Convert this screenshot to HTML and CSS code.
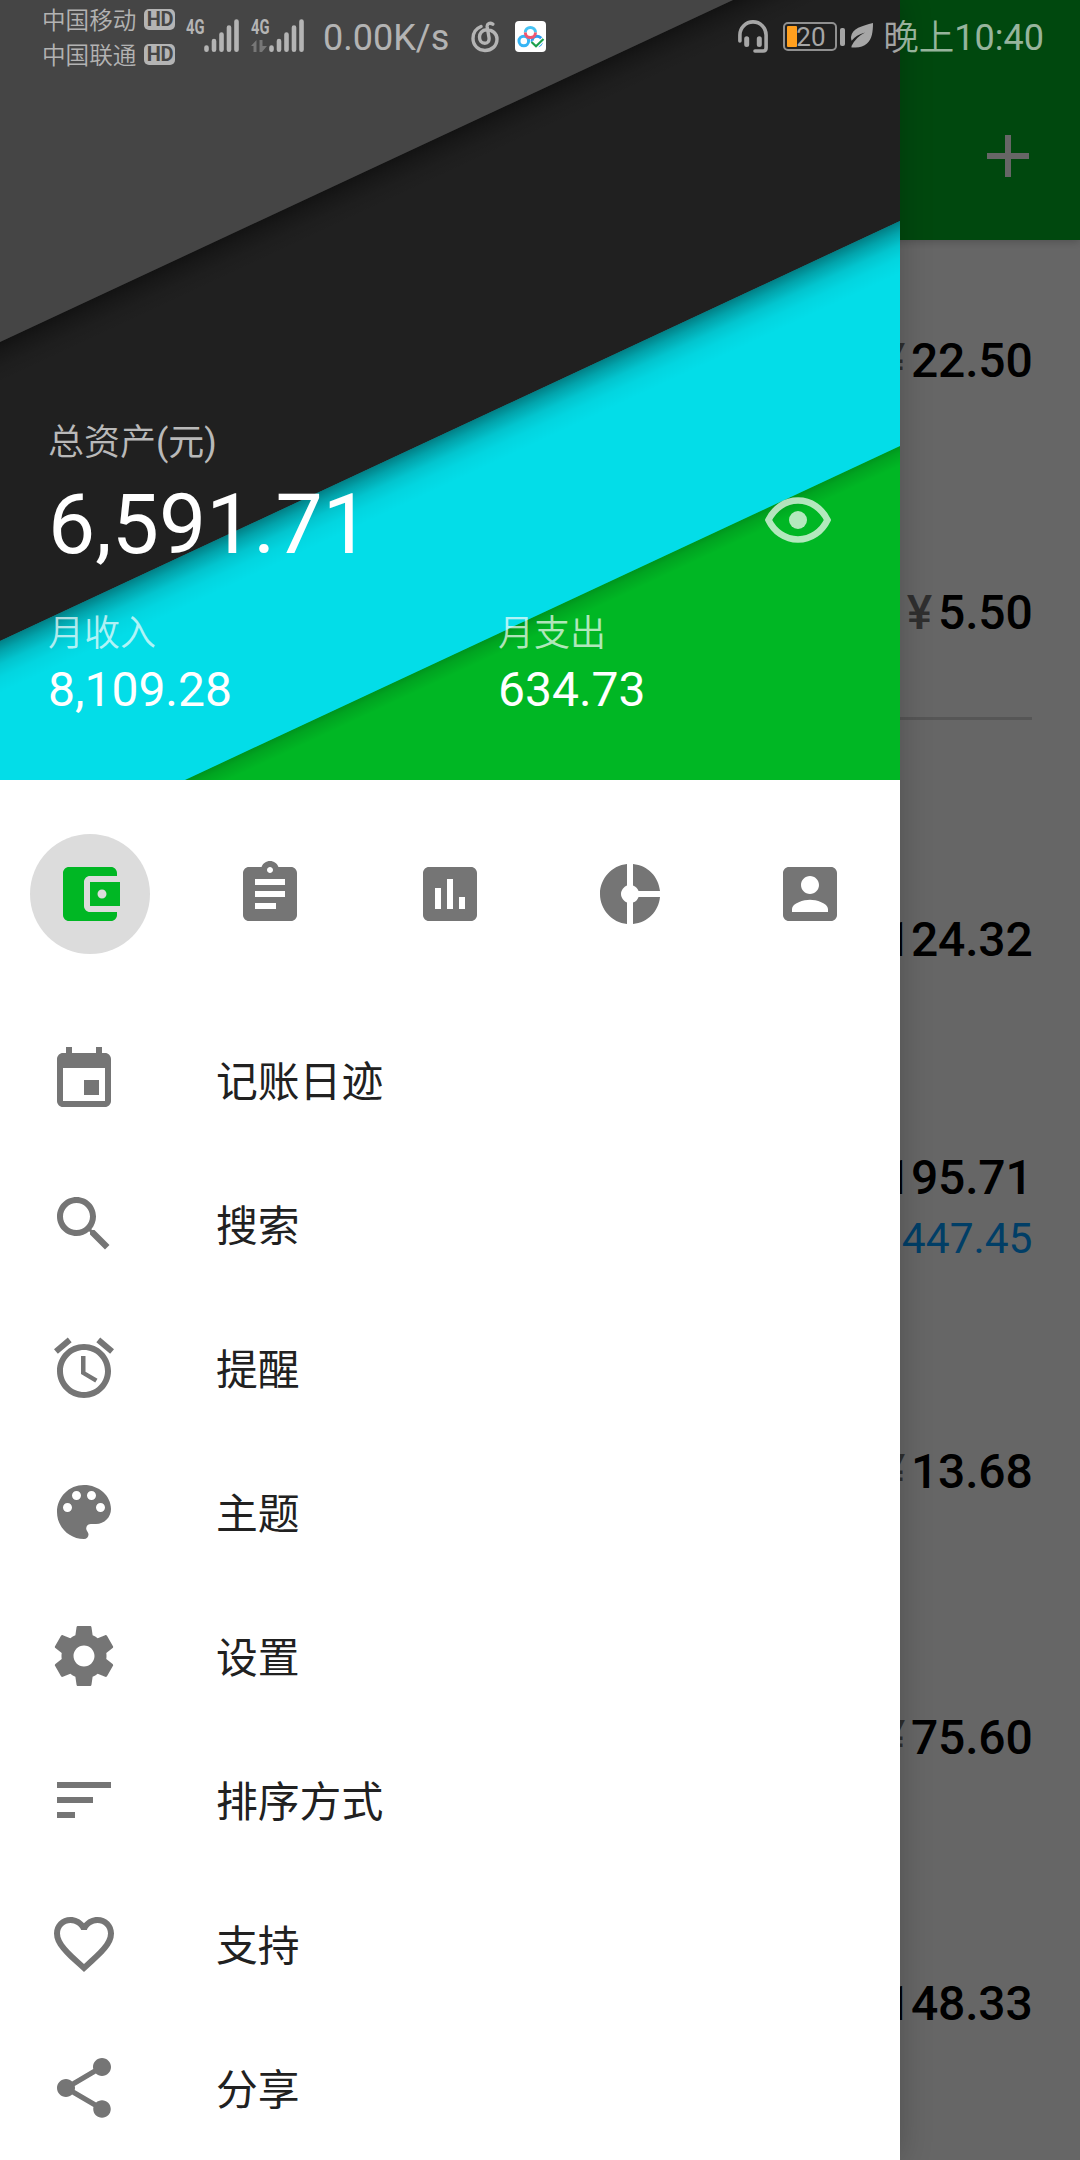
FILE: index.html
```html
<!DOCTYPE html>
<html lang="zh-CN">
<head>
<meta charset="utf-8">
<title>记账</title>
<link rel="stylesheet" href="styles.css">
</head>
<body>
<div class="screen">
  <main class="page">
    <header class="appbar">
      <svg class="icon appbar-add" viewBox="0 0 24 24"><path d="M19 13h-6v6h-2v-6H5v-2h6V5h2v6h6v2z"/></svg>
    </header>
    <section class="recent">
      <div class="entry"><span class="yen">¥</span>22.50</div>
      <div class="entry entry-last"><span class="yen">¥</span>5.50</div>
    </section>
    <section class="accounts">
      <div class="account"><p class="amount"><span class="yen">¥</span>124.32</p></div>
      <div class="account"><p class="amount"><span class="yen">¥</span>195.71</p><p class="credit">447.45</p></div>
      <div class="account"><p class="amount"><span class="yen">¥</span>13.68</p></div>
      <div class="account"><p class="amount"><span class="yen">¥</span>75.60</p></div>
      <div class="account"><p class="amount"><span class="yen">¥</span>148.33</p></div>
    </section>
  </main>

  <div class="scrim"></div>

  <aside class="drawer">
    <header class="summary">
      <svg class="backdrop" viewBox="0 0 900 780">
        <defs>
          <linearGradient id="s1" gradientUnits="userSpaceOnUse" x1="0" y1="342" x2="16" y2="376.3">
            <stop offset="0" stop-opacity=".42"/><stop offset=".25" stop-opacity=".25"/><stop offset=".6" stop-opacity=".08"/><stop offset="1" stop-opacity="0"/>
          </linearGradient>
          <linearGradient id="s2" gradientUnits="userSpaceOnUse" x1="0" y1="641" x2="20" y2="683.9">
            <stop offset="0" stop-opacity=".42"/><stop offset=".2" stop-opacity=".26"/><stop offset=".45" stop-opacity=".11"/><stop offset=".7" stop-opacity=".035"/><stop offset="1" stop-opacity="0"/>
          </linearGradient>
          <linearGradient id="s3" gradientUnits="userSpaceOnUse" x1="0" y1="866" x2="8" y2="883.100">
            <stop offset="0" stop-opacity=".2"/><stop offset=".35" stop-opacity=".1"/><stop offset="1" stop-opacity="0"/>
          </linearGradient>
        </defs>
        <path fill="#00b724" d="M0 0h900v780H0z"/>
        <path fill="url(#s3)" d="M0 866 900 446v334H0z"/>
        <path fill="#03dde8" d="M0 0H900V446L185 780H0z"/>
        <path fill="url(#s2)" d="M0 641 900 221V446L185 780H0z"/>
        <path fill="#202020" d="M0 0H900V221L0 641z"/>
        <path fill="url(#s1)" d="M0 342 733 0H900V221L0 641z"/>
        <path fill="#454545" d="M0 0H733L0 342z"/>
      </svg>
      <div class="total">
        <div>
          <p class="label">总资产<span class="unit">(元)</span></p>
          <p class="total-value">6,591.71</p>
        </div>
        <svg class="eye" viewBox="0 0 66 46"><path d="M3.500 23C9 11.500 20 3.500 33 3.500S57 11.500 62.500 23C57 34.500 46 42.500 33 42.500S9 34.500 3.500 23z"/><circle cx="33" cy="23" r="9"/></svg>
      </div>
      <div class="month">
        <div><p class="label">月收入</p><p class="month-value">8,109.28</p></div>
        <div><p class="label">月支出</p><p class="month-value">634.73</p></div>
      </div>
    </header>

    <nav class="tabs">
      <a class="tab tab-active"><svg class="icon" viewBox="0 0 24 24"><path d="M21 18v1c0 1.100-.9 2-2 2H5c-1.110 0-2-.9-2-2V5c0-1.100.89-2 2-2h14c1.100 0 2 .9 2 2v1h-9c-1.110 0-2 .9-2 2v8c0 1.100.89 2 2 2h9zm-9-2h10V8H12v8zm4-2.500c-.83 0-1.500-.67-1.500-1.500s.67-1.500 1.500-1.500 1.500.67 1.500 1.500-.67 1.500-1.500 1.500z"/></svg></a>
      <a class="tab"><svg class="icon" viewBox="0 0 24 24"><path d="M19 3h-4.180C14.400 1.840 13.300 1 12 1c-1.300 0-2.400.84-2.820 2H5c-1.100 0-2 .9-2 2v14c0 1.100.9 2 2 2h14c1.100 0 2-.9 2-2V5c0-1.100-.9-2-2-2zm-7 0c.55 0 1 .45 1 1s-.45 1-1 1-1-.45-1-1 .45-1 1-1zm2 14H7v-2h7v2zm3-4H7v-2h10v2zm0-4H7V7h10v2z"/></svg></a>
      <a class="tab"><svg class="icon" viewBox="0 0 24 24"><path d="M19 3H5c-1.100 0-2 .9-2 2v14c0 1.100.9 2 2 2h14c1.100 0 2-.9 2-2V5c0-1.100-.9-2-2-2zM9 17H7v-7h2v7zm4 0h-2V7h2v10zm4 0h-2v-4h2v4z"/></svg></a>
      <a class="tab"><svg class="icon" viewBox="0 0 24 24"><path d="M11 9.160V2c-5 .5-9 4.790-9 10s4 9.500 9 10v-7.160c-1-.41-2-1.520-2-2.840s1-2.430 2-2.840zM14.860 11H22c-.48-4.750-4-8.530-9-9v7.160c1 .3 1.520.98 1.860 1.840zM13 14.840V22c5-.47 8.520-4.250 9-9h-7.140c-.34.86-.86 1.540-1.860 1.840z"/></svg></a>
      <a class="tab"><svg class="icon" viewBox="0 0 24 24"><path d="M3 5v14c0 1.100.89 2 2 2h14c1.100 0 2-.9 2-2V5c0-1.100-.9-2-2-2H5c-1.110 0-2 .9-2 2zm12 4c0 1.660-1.340 3-3 3s-3-1.340-3-3 1.340-3 3-3 3 1.340 3 3zm-9 8c0-2 4-3.100 6-3.100s6 1.100 6 3.100v1H6v-1z"/></svg></a>
    </nav>

    <ul class="menu">
      <li><svg class="icon" viewBox="0 0 24 24"><path d="M17 12h-5v5h5v-5z"/><path d="M16 1v2H8V1H6v2H5c-1.100 0-2 .9-2 2v14c0 1.100.9 2 2 2h14c1.100 0 2-.9 2-2V5c0-1.100-.9-2-2-2h-1V1h-2zm3 18H5V8h14v11z"/></svg><span>记账日迹</span></li>
      <li><svg class="icon" viewBox="0 0 24 24"><path d="M15.500 14h-.79l-.28-.27C15.410 12.590 16 11.110 16 9.500 16 5.910 13.090 3 9.500 3S3 5.910 3 9.500 5.910 16 9.500 16c1.610 0 3.090-.59 4.230-1.570l.27.28v.79l5 4.990L20.490 19l-4.990-5zm-6 0C7.010 14 5 11.990 5 9.500S7.010 5 9.500 5 14 7.010 14 9.500 11.990 14 9.500 14z"/></svg><span>搜索</span></li>
      <li><svg class="icon" viewBox="0 0 24 24"><path d="M22 5.720l-4.600-3.860-1.290 1.530 4.600 3.860L22 5.720zM7.880 3.390L6.600 1.860 2 5.710l1.290 1.530 4.590-3.850zM12.500 8H11v6l4.750 2.850.75-1.230-4-2.370V8zM12 4c-4.970 0-9 4.030-9 9s4.020 9 9 9c4.970 0 9-4.030 9-9s-4.030-9-9-9zm0 16c-3.870 0-7-3.130-7-7s3.130-7 7-7 7 3.130 7 7-3.130 7-7 7z"/></svg><span>提醒</span></li>
      <li><svg class="icon" viewBox="0 0 24 24"><path d="M12 3c-4.970 0-9 4.030-9 9s4.030 9 9 9c.83 0 1.500-.67 1.500-1.500 0-.39-.15-.74-.39-1.010-.23-.26-.38-.61-.38-.99 0-.83.67-1.500 1.500-1.500H16c2.760 0 5-2.240 5-5 0-4.420-4.030-8-9-8zm-5.500 9c-.83 0-1.500-.67-1.500-1.500S5.670 9 6.500 9 8 9.670 8 10.500 7.330 12 6.500 12zm3-4C8.670 8 8 7.330 8 6.500S8.670 5 9.500 5s1.500.67 1.500 1.500S10.330 8 9.500 8zm5 0c-.83 0-1.500-.67-1.500-1.500S13.670 5 14.500 5s1.500.67 1.500 1.500S15.330 8 14.500 8zm3 4c-.83 0-1.500-.67-1.500-1.500S16.670 9 17.500 9s1.500.67 1.500 1.500-.67 1.500-1.500 1.500z"/></svg><span>主题</span></li>
      <li><svg class="icon" viewBox="0 0 24 24"><path d="M19.430 12.980c.04-.32.07-.64.07-.98s-.03-.66-.07-.98l2.110-1.650c.19-.15.24-.42.12-.64l-2-3.460c-.12-.22-.39-.3-.61-.22l-2.490 1c-.52-.4-1.080-.73-1.690-.98l-.38-2.650C14.460 2.180 14.250 2 14 2h-4c-.25 0-.46.18-.49.42l-.38 2.650c-.61.25-1.170.59-1.690.98l-2.490-1c-.23-.09-.49 0-.61.22l-2 3.460c-.13.22-.07.49.12.64l2.110 1.650c-.04.32-.07.65-.07.98s.03.66.07.98l-2.110 1.650c-.19.15-.24.42-.12.64l2 3.460c.12.22.39.3.61.22l2.490-1c.52.4 1.080.73 1.690.98l.38 2.650c.03.24.24.42.49.42h4c.25 0 .46-.18.49-.42l.38-2.650c.61-.25 1.170-.59 1.690-.98l2.490 1c.23.09.49 0 .61-.22l2-3.460c.12-.22.07-.49-.12-.64l-2.110-1.650zM12 15.500c-1.930 0-3.500-1.570-3.500-3.500s1.570-3.500 3.500-3.500 3.500 1.570 3.500 3.500-1.570 3.500-3.500 3.500z"/></svg><span>设置</span></li>
      <li><svg class="icon" viewBox="0 0 24 24"><path d="M3 18h6v-2H3v2zM3 6v2h18V6H3zm0 7h12v-2H3v2z"/></svg><span>排序方式</span></li>
      <li><svg class="icon" viewBox="0 0 24 24"><path d="M16.500 3c-1.740 0-3.410.81-4.500 2.090C10.910 3.810 9.240 3 7.500 3 4.420 3 2 5.420 2 8.500c0 3.780 3.400 6.860 8.550 11.540L12 21.350l1.450-1.320C18.600 15.360 22 12.280 22 8.500 22 5.420 19.580 3 16.500 3zm-4.400 15.550l-.1.100-.1-.1C7.140 14.240 4 11.390 4 8.500 4 6.500 5.500 5 7.500 5c1.540 0 3.040.99 3.570 2.360h1.870C13.460 5.990 14.960 5 16.500 5c2 0 3.500 1.500 3.500 3.500 0 2.890-3.140 5.740-7.900 10.050z"/></svg><span>支持</span></li>
      <li><svg class="icon" viewBox="0 0 24 24"><path d="M18 16.080c-.76 0-1.440.3-1.960.77L8.910 12.700c.05-.23.09-.46.09-.7s-.04-.47-.09-.7l7.050-4.110c.54.5 1.250.81 2.040.81 1.660 0 3-1.340 3-3s-1.340-3-3-3-3 1.340-3 3c0 .24.04.47.09.7L8.040 9.810C7.500 9.310 6.790 9 6 9c-1.660 0-3 1.340-3 3s1.340 3 3 3c.79 0 1.500-.31 2.040-.81l7.120 4.160c-.05.21-.08.43-.08.65 0 1.610 1.310 2.920 2.920 2.920s2.920-1.310 2.920-2.920-1.310-2.920-2.920-2.920z"/></svg><span>分享</span></li>
    </ul>
  </aside>

  <div class="statusbar">
    <div class="carriers">
      <p>中国移动<b class="hd">HD</b></p>
      <p>中国联通<b class="hd">HD</b></p>
    </div>
    <svg class="signals" viewBox="0 0 120 72">
      <text x="0" y="34" textLength="18.500" lengthAdjust="spacingAndGlyphs">4G</text>
      <g stroke-width="4.600" stroke-linecap="round">
        <path d="M20.500 47.600v2.200M28 41v8.800M35.500 34.500v15.300M43 27.500v22.300M50.500 21.500v28.300"/>
        <path d="M85.500 47.600v2.200M93 41v8.800M100.500 34.500v15.300M108 27.500v22.300M115.500 21.500v28.300"/>
      </g>
      <text x="65" y="34" textLength="18.500" lengthAdjust="spacingAndGlyphs">4G</text>
      <path class="traffic" d="M65 46l5.500-6v12h-3v-6zM73.500 40h3v6h4.500l-5 6h-2.500z"/>
    </svg>
    <span class="speed">0.00K/s</span>
    <svg class="music" viewBox="0 0 28 32"><path d="M10 5.500C5 7.500 2 12 2 17.500 2 24.500 7.500 29.500 14 29.500s12-4.500 12-11.500C26 12.500 21.500 8.800 15.500 8.800 11 8.800 8.500 12.500 8.500 16s2 6.300 5.300 6.300S18.500 19.800 18 16.500L16.200 6C15.800 2.500 19 1.200 21.800 3.200"/></svg>
    <svg class="cloud" viewBox="0 0 31 31">
      <rect width="31" height="31" rx="4" fill="#fff"/>
      <g fill="none" stroke-width="3"><circle cx="8.800" cy="20" r="4.800" stroke="#36b5f5"/><circle cx="22" cy="20" r="4.800" stroke="#2b9df0"/><path d="M10.300 11.500a5.100 5.100 0 1 1 10.200 0" stroke="#46c3f4"/><path d="M10.300 11.500a5.100 5.100 0 1 0 10.200 0" stroke="#f0566f"/></g>
      <path d="M16.500 21l4.500 4.300 7.500-7.300" fill="none" stroke="#fff" stroke-width="4.500"/>
      <path d="M16.500 21l4.500 4.300 7.500-7.300" fill="none" stroke="#1c9f4b" stroke-width="2.200"/>
    </svg>
    <span class="spacer"></span>
    <svg class="headset" viewBox="0 0 30 34"><path fill="none" stroke-width="3.600" stroke-linecap="round" d="M1.900 21V15a13.100 13.100 0 0 1 26.200 0v13q0 3-3 3H17"/><path fill="none" stroke-width="5" stroke-linecap="round" d="M8.700 18.700v5.800M21.300 18.700v5.800"/></svg>
    <div class="battery"><span class="battery-level"></span>20</div>
    <svg class="leaf" viewBox="0 0 24 26"><path d="M23 0C12 3 2 5 1 14q0 2 .6 3.800Q6 12 15 9.500 6 14 1.500 23v1.500H4q8 .5 13-4C22 16 23 9 23 0z"/></svg>
    <span class="clock">晚上<span class="clock-time">10:40</span></span>
  </div>
</div>
</body>
</html>
```
FILE: styles.css
```css
* {
  box-sizing: border-box;
  margin: 0;
  padding: 0;
}

body {
  font-family: Roboto, "Noto Sans CJK SC", sans-serif;
}

.screen {
  position: relative;
  width: 1080px;
  height: 2160px;
  overflow: hidden;
}

.icon {
  display: block;
  flex: none;
  width: 72px;
  height: 72px;
  fill: #757575;
}

/* Account list behind the drawer */
.page {
  height: 2160px;
  background: #fff;
}

.appbar {
  display: flex;
  justify-content: flex-end;
  height: 240px;
  padding: 120px 36px 0 0;
  background: #00b424;
  position: relative;
  box-shadow: 0 2px 8px rgba(0, 0, 0, .2);
}

.appbar-add {
  fill: #fff;
}

.recent {
  width: 1032px;
  height: 480px;
  border-bottom: 3px solid #d8d8d8;
}

.entry,
.amount {
  font-size: 48px;
  font-weight: 500;
  line-height: 56px;
  text-align: right;
  letter-spacing: -.2px;
  margin-right: -.5px;
}

.entry {
  padding-top: 93px;
  height: 252px;
}

.yen {
  margin-right: 6px;
  color: rgba(0, 0, 0, .54);
}

.accounts {
  padding: 87px 48px 0 0;
}

.account {
  display: flex;
  flex-direction: column;
  align-items: flex-end;
  justify-content: center;
  height: 266px;
}

.credit {
  margin: 5px -.5px -4px 0;
  font-size: 42.500px;
  line-height: 56px;
  color: #039cff;
}

.scrim {
  position: absolute;
  inset: 0;
  background: rgba(0, 0, 0, .6);
}

/* Navigation drawer */
.drawer {
  position: absolute;
  top: 0;
  left: 0;
  width: 900px;
  height: 2160px;
  background: #fff;
  box-shadow: 0 0 30px rgba(0, 0, 0, .22);
}

.summary {
  position: relative;
  height: 780px;
  padding: 419px 0 0 48px;
  color: #fff;
}

.backdrop {
  position: absolute;
  inset: 0;
  width: 900px;
  height: 780px;
}

.total,
.month {
  position: relative;
  display: flex;
}

.total {
  justify-content: space-between;
  padding-right: 69px;
}

.label {
  font-size: 36px;
  font-weight: 350;
  line-height: 48px;
  color: rgba(255, 255, 255, .7);
}

.unit {
  font-weight: 400;
}

.total-value {
  font-size: 84px;
  line-height: 100px;
  margin-top: 8px;
}

.eye {
  width: 66px;
  height: 46px;
  margin-top: 78px;
  opacity: .7;
  fill: #fff;
}

.eye path {
  fill: none;
  stroke: #fff;
  stroke-width: 6.500px;
}

.month {
  margin-top: 35px;
}

.month > div {
  flex: none;
  width: 450px;
}

.month-value {
  font-size: 48px;
  line-height: 60px;
  margin-top: 2px;
}

.tabs {
  display: flex;
  height: 228px;
  padding-top: 54px;
}

.tab {
  display: flex;
  align-items: center;
  justify-content: center;
  width: 120px;
  height: 120px;
  margin: 0 30px;
  border-radius: 50%;
}

.tab-active {
  background: #dcdcdc;
}

.tab-active .icon {
  fill: #00b724;
}

.menu {
  list-style: none;
}

.menu li {
  display: flex;
  align-items: center;
  gap: 96px;
  height: 144px;
  padding-left: 48px;
  font-size: 41.800px;
  font-weight: 400;
  color: #212121;
}

.menu span {
  padding-bottom: 3px;
}

/* System status bar */
.statusbar {
  position: absolute;
  top: 0;
  left: 0;
  display: flex;
  width: 1080px;
  height: 72px;
  padding: 0 36px 0 42px;
  color: rgba(255, 255, 255, .6);
}

.statusbar > * {
  flex: none;
}

.carriers {
  padding-top: 1px;
  width: 144px;
  font-size: 23.600px;
  font-weight: 350;
}

.carriers p {
  display: flex;
  align-items: center;
  height: 35px;
}

.hd {
  width: 31px;
  height: 21px;
  margin: 2px 0 0 8px;
  border-radius: 5px;
  background: #b4b4b4;
  color: #454545;
  font-size: 20px;
  font-weight: 700;
  line-height: 21px;
  letter-spacing: -.5px;
  text-align: center;
}

.signals {
  width: 120px;
  height: 72px;
  font-size: 20px;
  font-weight: 700;
  fill: #b4b4b4;
}

.signals g {
  stroke: #b4b4b4;
}

.signals .traffic {
  fill: #777;
}

.speed {
  width: 150px;
  padding-left: 17px;
  font-size: 36px;
  line-height: 76px;
}

.music {
  width: 28px;
  height: 32px;
  margin: 21px 0 0 15px;
  fill: none;
  stroke: #b4b4b4;
  stroke-width: 3.400px;
  stroke-linecap: round;
}

.cloud {
  width: 31px;
  height: 31px;
  margin: 21px 0 0 16px;
}

.statusbar .spacer {
  flex: 1;
}

.headset {
  width: 30px;
  height: 34px;
  margin-top: 20px;
  stroke: #a6a6a6;
}

.battery {
  position: relative;
  width: 54px;
  height: 29px;
  margin: 22px 13px 0 15px;
  padding-left: 11px;
  border: 2px solid #909090;
  border-radius: 5px;
  font-size: 26px;
  line-height: 26px;
  color: #a6a6a6;
}

.battery::after {
  content: "";
  position: absolute;
  top: 4px;
  left: 55px;
  width: 4.500px;
  height: 18px;
  border-radius: 2px;
  background: #a6a6a6;
}

.battery-level {
  position: absolute;
  top: 2px;
  left: 2px;
  width: 10px;
  height: 21px;
  border-radius: 1px;
  background: #ff9f1e;
}

.leaf {
  width: 24px;
  height: 26px;
  margin: 23px 9px 0 0;
  fill: #a6a6a6;
}

.clock {
  font-size: 35.500px;
  font-weight: 350;
  line-height: 76px;
}

.clock-time {
  font-size: 36px;
  font-weight: 400;
}
```
